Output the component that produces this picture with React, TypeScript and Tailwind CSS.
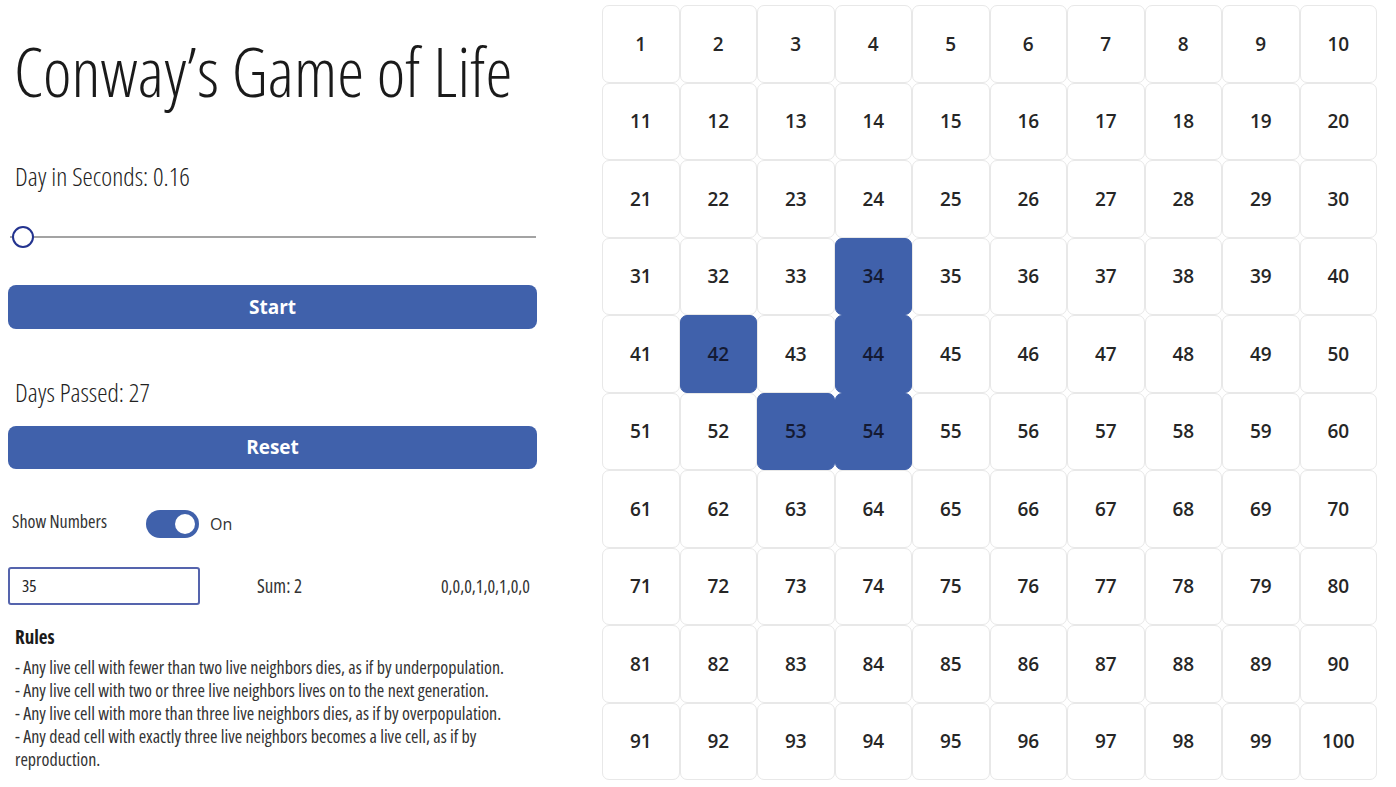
import React from "react";

const LIVE = new Set([34, 42, 44, 53, 54]);

const RULES = [
  "- Any live cell with fewer than two live neighbors dies, as if by underpopulation.",
  "- Any live cell with two or three live neighbors lives on to the next generation.",
  "- Any live cell with more than three live neighbors dies, as if by overpopulation.",
  "- Any dead cell with exactly three live neighbors becomes a live cell, as if by reproduction.",
];

const cond = "font-['Open_Sans',sans-serif] [font-stretch:75%]";

function Slider() {
  return (
    <div className="relative ml-[10px] flex h-[24px] w-[526px] items-center">
      <div className="h-[2px] w-full bg-[#a3a3a3]" />
      <div className="absolute left-[2px] top-[1px] h-[22px] w-[22px] rounded-full border-[2.5px] border-[#23338f] bg-white" />
    </div>
  );
}

function Toggle() {
  return (
    <div className="flex h-[28px] w-[53px] items-center justify-end rounded-full bg-[#4061ab] pr-[4px]">
      <div className="h-[20px] w-[20px] rounded-full bg-white" />
    </div>
  );
}

function Cell({ n }: { n: number }) {
  const live = LIVE.has(n);
  return (
    <div
      className={
        "flex items-center justify-center rounded-[7px] border-[1.5px] text-[19px] font-semibold " +
        (live ? "border-[#4061ab] bg-[#4061ab] text-[#141a33]" : "border-[#e8e8e8] bg-white text-[#262626]")
      }
    >
      {n}
    </div>
  );
}

export default function App() {
  const cells = Array.from({ length: 100 }, (_, i) => i + 1);
  return (
    <div className="flex h-[787px] w-[1396px] overflow-hidden bg-white font-['Open_Sans',sans-serif]">
      <div className="flex w-[602px] shrink-0 flex-col [&>*]:shrink-0">
        <h1 className={`${cond} ml-[14px] mt-[29px] text-[68px] font-light leading-[84px] text-[#1a1a1a]`}>
          Conway’s Game of Life
        </h1>
        <div className={`${cond} ml-[15px] mt-[47px] text-[26px] font-light leading-[32px] text-[#222]`}>
          Day in Seconds: 0.16
        </div>
        <div className="mt-[33px]">
          <Slider />
        </div>
        <button className="ml-[8px] mt-[36px] h-[44px] w-[529px] rounded-[8px] bg-[#4061ab] text-[19px] font-bold text-white">
          Start
        </button>
        <div className={`${cond} ml-[15px] mt-[47px] text-[26px] font-light leading-[32px] text-[#222]`}>
          Days Passed: 27
        </div>
        <button className="ml-[8px] mt-[18px] h-[43px] w-[529px] rounded-[8px] bg-[#4061ab] text-[19px] font-bold text-white">
          Reset
        </button>
        <div className="ml-[12px] mt-[41px] flex h-[28px] items-center">
          <span className={`${cond} w-[134px] -translate-y-[3px] text-[18px] text-[#333]`}>Show Numbers</span>
          <Toggle />
          <span className="ml-[11px] text-[16px] text-[#333]">On</span>
        </div>
        <div className="ml-[8px] mt-[29px] flex h-[38px] w-[522px] items-center">
          <div className={`${cond} flex h-[38px] w-[192px] items-center rounded-[3px] border-2 border-[#5564ad] pl-[12px] text-[17px] text-[#222]`}>
            35
          </div>
          <span className={`${cond} ml-[57px] text-[19px] text-[#333]`}>Sum: 2</span>
          <span className={`${cond} ml-auto text-[18px] text-[#333]`}>0,0,0,1,0,1,0,0</span>
        </div>
        <div className={`${cond} ml-[15px] mt-[21px] text-[19px] font-bold leading-[22px] text-[#1a1a1a]`}>Rules</div>
        <div className={`${cond} ml-[15px] mt-[8px] w-[500px] text-[18px] leading-[23px] text-[#333]`}>
          {RULES.map((r) => (
            <div key={r}>{r}</div>
          ))}
        </div>
      </div>
      <div className="mt-[5px] grid h-[775px] w-[775px] shrink-0 grid-cols-10 grid-rows-10">
        {cells.map((n) => (
          <Cell key={n} n={n} />
        ))}
      </div>
    </div>
  );
}
